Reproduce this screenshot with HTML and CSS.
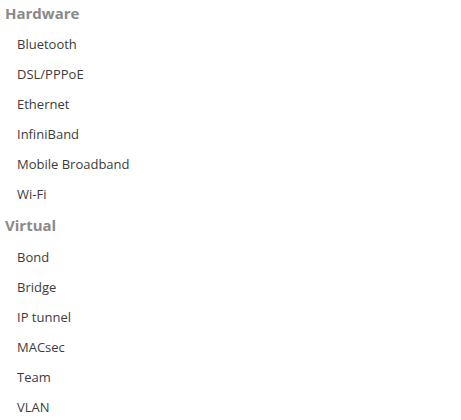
FILE: index.html
```html
<!DOCTYPE html>
<html lang="en">
<head>
    <meta charset="UTF-8">
    <title>Connection type</title>
    <link rel="stylesheet" href="styles.css">
</head>
<body>

<div class="types">
    <div class="group-title first">Hardware</div>
    <div class="item">Bluetooth</div>
    <div class="item">DSL/PPPoE</div>
    <div class="item">Ethernet</div>
    <div class="item">InfiniBand</div>
    <div class="item">Mobile Broadband</div>
    <div class="item">Wi-Fi</div>

    <div class="group-title">Virtual</div>
    <div class="item">Bond</div>
    <div class="item">Bridge</div>
    <div class="item">IP tunnel</div>
    <div class="item">MACsec</div>
    <div class="item">Team</div>
    <div class="item">VLAN</div>
</div>

</body>
</html>
```

FILE: styles.css
```css
body, html {
    margin: 0;
    padding: 0;
    background: #ffffff;
    font-family: 'Open Sans', sans-serif;
    color: #3c3c3c;
}
.types {
    display: flex;
    flex-direction: column;
}
.group-title {
    height: 26px;
    line-height: 26px;
    padding-left: 5px;
    margin: 3px 0 4px;
    font-size: 15px;
    font-weight: bold;
    color: #8a8a8a;
}
.group-title.first {
    margin: 0 0 3px;
}
.item {
    height: 30px;
    line-height: 30px;
    padding-left: 17px;
    font-size: 13px;
}
```
